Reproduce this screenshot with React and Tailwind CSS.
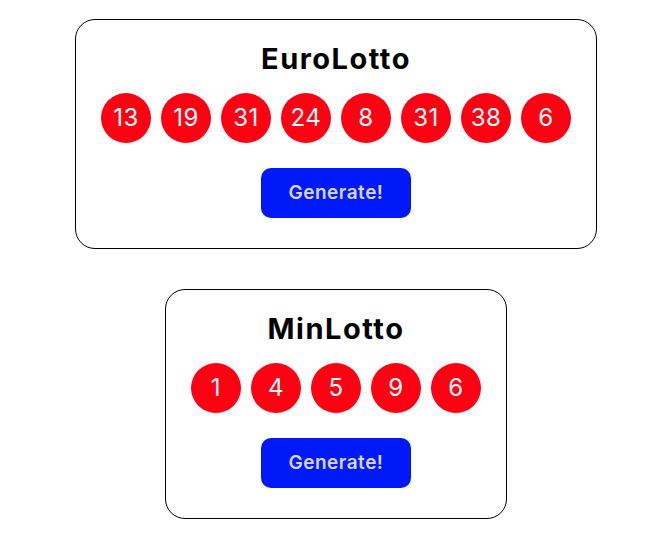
import React, { useState } from 'react';

const euroInit = [13, 19, 31, 24, 8, 31, 38, 6];
const minInit = [1, 4, 5, 9, 6];

const randomNumbers = (count, max) =>
    Array.from({ length: count }, () => Math.floor(Math.random() * max) + 1);

const Lotto = ({ title, initial, max }) => {
    const [numbers, setNumbers] = useState(initial);

    return (
        <div className="flex flex-col items-center border border-black rounded-[20px] px-[25px] pt-[22px] pb-[30px]">
            <h1 className="text-[29px] leading-[34px] font-bold tracking-[1.5px] text-black">{title}</h1>
            <div className="flex gap-[10px] mt-[17px]">
                {numbers.map((n, i) => (
                    <div
                        key={i}
                        className="w-[50px] h-[50px] rounded-full bg-[#ff0013] flex items-center justify-center text-white text-[24px] tracking-[0.5px]"
                    >
                        {n}
                    </div>
                ))}
            </div>
            <button
                className="mt-[25px] w-[150px] h-[50px] rounded-[10px] bg-[#0019f9] text-[#d6d6f0] text-[19px] tracking-[0.5px] font-semibold"
                onClick={() => setNumbers(randomNumbers(initial.length, max))}
            >
                Generate!
            </button>
        </div>
    );
};

const App = () => {
    return (
        <div
            className="min-h-screen bg-white flex flex-col items-center gap-[40px] pt-[19px] pl-[3px]"
            style={{ fontFamily: 'Inter, "Noto Sans", sans-serif' }}
        >
            <Lotto title="EuroLotto" initial={euroInit} max={50} />
            <Lotto title="MinLotto" initial={minInit} max={36} />
        </div>
    );
};

export default App;
